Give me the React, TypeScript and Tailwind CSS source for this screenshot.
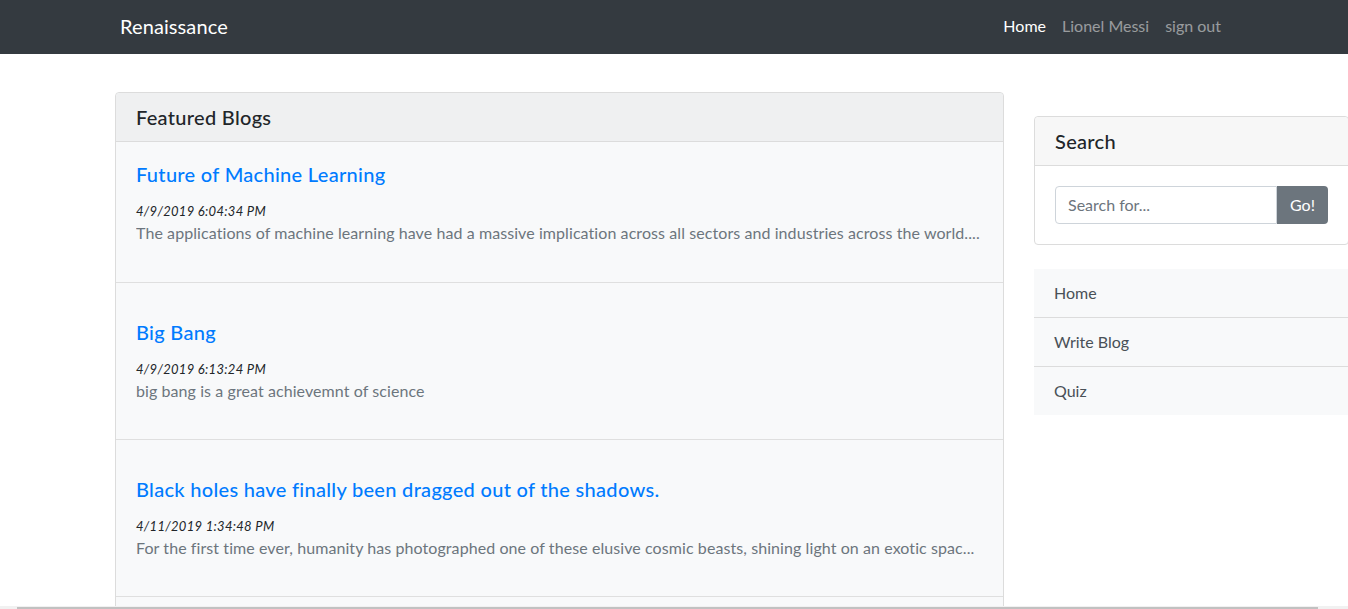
import React from "react";

const blogs = [
  {
    title: "Future of Machine Learning",
    date: "4/9/2019 6:04:34 PM",
    text: "The applications of machine learning have had a massive implication across all sectors and industries across the world....",
  },
  {
    title: "Big Bang",
    date: "4/9/2019 6:13:24 PM",
    text: "big bang is a great achievemnt of science",
  },
  {
    title: "Black holes have finally been dragged out of the shadows.",
    date: "4/11/2019 1:34:48 PM",
    text: "For the first time ever, humanity has photographed one of these elusive cosmic beasts, shining light on an exotic spac...",
  },
];

const font = { fontFamily: "Lato, 'Open Sans', sans-serif" };

export default function App() {
  return (
    <div className="h-[609px] overflow-hidden bg-white text-[#212529]" style={font}>
      {/* Navbar */}
      <nav className="h-[54px] bg-[#343a40] flex items-center">
        <div className="w-full flex items-center pl-[120px] pr-[119px] pb-[2px]">
          <span className="text-white text-[20px] leading-[30px] tracking-[0.1px]">Renaissance</span>
          <ul className="ml-auto flex items-center text-[16px] leading-6">
            <li className="px-2 text-white">Home</li>
            <li className="px-2 text-white/50">Lionel Messi</li>
            <li className="px-2 text-white/50">sign out</li>
          </ul>
        </div>
      </nav>

      <div className="flex pl-[115px] gap-[30px]">
        {/* Featured blogs */}
        <section className="w-[889px] mt-[38px] border border-[#dcdcdc] rounded-t-[4px] bg-[#f8f9fa] shrink-0">
          <div className="h-[49px] bg-[#eff0f1] border-b border-[#dcdcdc] px-5 flex items-center rounded-t-[4px]">
            <h2 className="text-[20px] font-medium leading-6 tracking-[0.3px]">Featured Blogs</h2>
          </div>
          {blogs.map((b, i) => (
            <article
              key={b.title}
              className={
                i === 0
                  ? "h-[141px] border-b border-[#dfdfdf] px-5 pt-[20px]"
                  : "h-[157px] border-b border-[#dfdfdf] px-5 pt-[37px]"
              }
            >
              <h3 className="text-[20px] leading-6 font-medium text-[#007bff] tracking-[0.3px]">{b.title}</h3>
              <p className="mt-[16px] text-[13px] leading-[18px] italic text-[#212529] tracking-[0.3px]">{b.date}</p>
              <p className="mt-px text-[16px] leading-6 text-[#6c757d] tracking-[0.08px] truncate">{b.text}</p>
            </article>
          ))}
          <div className="h-[40px]" />
        </section>

        {/* Sidebar */}
        <aside className="w-[315px] shrink-0">
          <div className="mt-[62px] border border-[#dcdcdc] rounded-[4px]">
            <div className="h-[49px] bg-[#f7f7f7] border-b border-[#dcdcdc] px-5 flex items-center rounded-t-[4px]">
              <h2 className="text-[20px] font-medium leading-6 tracking-[0.3px]">Search</h2>
            </div>
            <div className="p-5">
              <div className="flex h-[38px]">
                <input
                  className="flex-1 min-w-0 border border-[#ced4da] rounded-l-[4px] px-3 text-[16px] text-[#495057] placeholder:text-[#6c757d] outline-none"
                  placeholder="Search for..."
                  style={font}
                />
                <button className="w-[51px] bg-[#6c757d] text-white text-[16px] rounded-r-[4px]">Go!</button>
              </div>
            </div>
          </div>

          <ul className="mt-6 bg-[#f8f9fa] text-[16px] text-[#495057]">
            <li className="h-[49px] flex items-center px-5 border-b border-[#dcdcdc]">Home</li>
            <li className="h-[49px] flex items-center px-5 border-b border-[#dcdcdc]">Write Blog</li>
            <li className="h-[48px] flex items-center px-5">Quiz</li>
          </ul>
        </aside>
      </div>

      {/* horizontal scrollbar */}
      <div className="fixed bottom-0 left-0 right-0 h-[3px] bg-[#f1f1f1]">
        <div className="ml-[17px] w-[1301px] h-[2px] mt-px bg-[#c1c1c1]" />
      </div>
    </div>
  );
}
